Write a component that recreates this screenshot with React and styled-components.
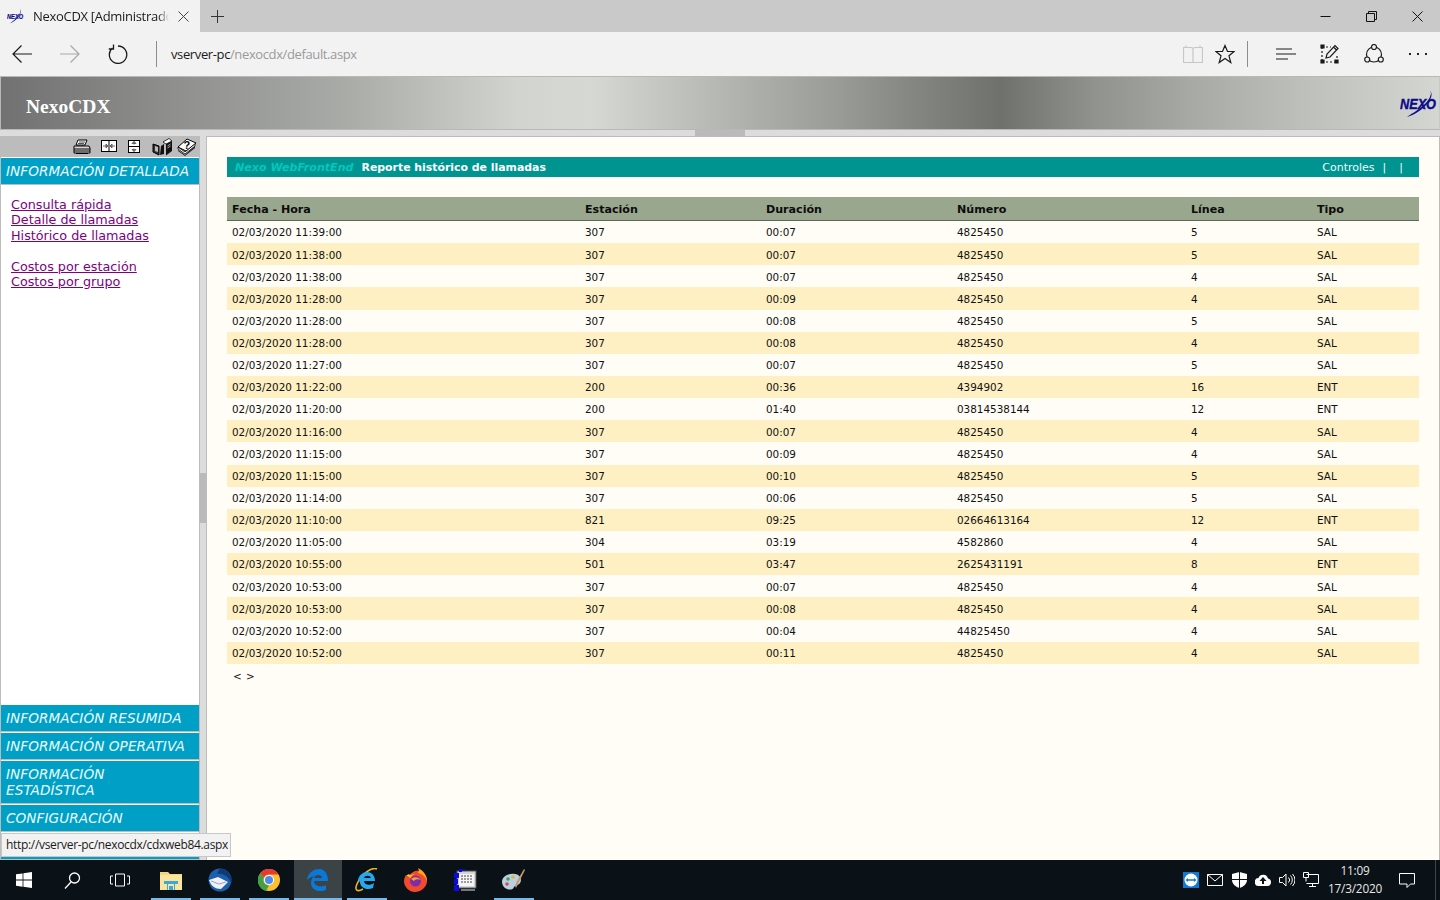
import styled, { createGlobalStyle } from 'styled-components'

const GlobalStyle = createGlobalStyle`
    html, body {
        margin: 0;
        height: 100%;
        overflow: hidden;
        background: #dcdcdc;
    }
    * { box-sizing: border-box; }
`

const calls = [
    ['02/03/2020 11:39:00', '307', '00:07', '4825450', '5', 'SAL'],
    ['02/03/2020 11:38:00', '307', '00:07', '4825450', '5', 'SAL'],
    ['02/03/2020 11:38:00', '307', '00:07', '4825450', '4', 'SAL'],
    ['02/03/2020 11:28:00', '307', '00:09', '4825450', '4', 'SAL'],
    ['02/03/2020 11:28:00', '307', '00:08', '4825450', '5', 'SAL'],
    ['02/03/2020 11:28:00', '307', '00:08', '4825450', '4', 'SAL'],
    ['02/03/2020 11:27:00', '307', '00:07', '4825450', '5', 'SAL'],
    ['02/03/2020 11:22:00', '200', '00:36', '4394902', '16', 'ENT'],
    ['02/03/2020 11:20:00', '200', '01:40', '03814538144', '12', 'ENT'],
    ['02/03/2020 11:16:00', '307', '00:07', '4825450', '4', 'SAL'],
    ['02/03/2020 11:15:00', '307', '00:09', '4825450', '4', 'SAL'],
    ['02/03/2020 11:15:00', '307', '00:10', '4825450', '5', 'SAL'],
    ['02/03/2020 11:14:00', '307', '00:06', '4825450', '5', 'SAL'],
    ['02/03/2020 11:10:00', '821', '09:25', '02664613164', '12', 'ENT'],
    ['02/03/2020 11:05:00', '304', '03:19', '4582860', '4', 'SAL'],
    ['02/03/2020 10:55:00', '501', '03:47', '2625431191', '8', 'ENT'],
    ['02/03/2020 10:53:00', '307', '00:07', '4825450', '4', 'SAL'],
    ['02/03/2020 10:53:00', '307', '00:08', '4825450', '4', 'SAL'],
    ['02/03/2020 10:52:00', '307', '00:04', '44825450', '4', 'SAL'],
    ['02/03/2020 10:52:00', '307', '00:11', '4825450', '4', 'SAL'],
]

const columns = ['Fecha - Hora', 'Estación', 'Duración', 'Número', 'Línea', 'Tipo']

// browser chrome drawings
const Stroke = ({ size = 20, w, h, children, color = '#1a1a1a', sw = 1.2 }) => (
    <svg width={w || size} height={h || size} viewBox={`0 0 ${w || size} ${h || size}`} fill="none" stroke={color} strokeWidth={sw}>
        {children}
    </svg>
)

const NexoLogo = ({ w = 38, h = 28 }) => (
    <svg width={w} height={h} viewBox="0 0 38 28" preserveAspectRatio="none">
        <path d="M30 1 C36 6 24 22 7 27 C14 22 30 14 31 3" fill="#10108a" />
        <text x="0" y="19" fontFamily="'Liberation Sans', sans-serif" fontWeight="700" fontStyle="italic" fontSize="14" textLength="36" lengthAdjust="spacingAndGlyphs" fill="#0c0c88" stroke="#0c0c88" strokeWidth=".4">NEXO</text>
    </svg>
)

const PrinterIcon = () => (
    <svg width="18" height="16" viewBox="0 0 18 16">
        <path d="M5 1h9l-2 5H3z" fill="#fff" stroke="#000" />
        <path d="M1 7h15l1 2v5H1z" fill="#d8d8d8" stroke="#000" />
        <path d="M1 10h16M1 12h16M3 14.500h12" stroke="#000" />
        <path d="M6 3h6M5 4.500h6" stroke="#555" />
    </svg>
)

const SplitIcon = ({ vertical }) => (
    <svg width={vertical ? 13 : 17} height="14" viewBox={vertical ? '0 0 13 14' : '0 0 17 14'}>
        {vertical ? (
            <>
                <rect x=".5" y=".5" width="11" height="12" fill="#fff" stroke="#000" />
                <path d="M1 6.500h11" stroke="#000" />
                <path d="M6 1.500v3M4 3.500h4l-2-2zM6 8.500v3M4 9.500h4l-2 2z" stroke="#666" fill="#666" />
            </>
        ) : (
            <>
                <rect x=".5" y=".5" width="15" height="11" fill="#fff" stroke="#000" />
                <path d="M8 1v10" stroke="#000" />
                <path d="M2 6h4M5 4v4l2-2zM10 6h4M11 4v4l-2-2z" stroke="#666" fill="#666" />
            </>
        )}
    </svg>
)

const BooksIcon = () => (
    <svg width="20" height="18" viewBox="0 0 20 18">
        <path d="M1 6l6 2v9l-6-3z" fill="#333" stroke="#000" />
        <path d="M3 8l3 1v5l-3-1z" fill="#bbb" />
        <path d="M9 8l3-2v10l-4 1z" fill="#111" />
        <path d="M11 4l6-3.500 3 2.500v10l-6 4.500V6z" fill="#111" />
        <path d="M11 4l6-3.500 3 2.500-6 3z" fill="#fff" stroke="#000" strokeWidth=".7" />
        <path d="M15.500 8l3-2M15.500 10l3-2" stroke="#aaa" />
    </svg>
)

const HelpBookIcon = () => (
    <svg width="20" height="18" viewBox="0 0 20 18">
        <path d="M1 12l7 5 10-9v2l-10 8-7-5z" fill="#222" />
        <path d="M1 9l7 5 10-9v3l-10 8-7-5z" fill="#fff" stroke="#000" strokeWidth=".8" />
        <path d="M1 9l9-8 9 4-10 8z" fill="#fff" stroke="#000" />
        <text x="6.500" y="10.500" fontFamily="'Liberation Sans', sans-serif" fontWeight="700" fontSize="11" fill="#000">?</text>
    </svg>
)

const WinLogo = () => (
    <svg width="16" height="16" viewBox="0 0 16 16" fill="#fff">
        <path d="M0 2.300l6.600-.9v6.200H0zM7.400 1.300L16 0v7.600H7.400zM0 8.400h6.600v6.300L0 13.800zM7.400 8.400H16V16l-8.600-1.200z" />
    </svg>
)

const FolderIcon = () => (
    <svg width="22" height="20" viewBox="0 0 22 20">
        <path d="M0 2h8l2 2h12v16H0z" fill="#f5d67e" />
        <path d="M0 5h22v15H0z" fill="#fbe49d" />
        <path d="M4 11h14v3h-3v6H7v-6H4z" fill="#3da7d9" />
        <path d="M8 14h6v6H8z" fill="#fbe49d" />
        <path d="M9 16h4v4H9z" fill="#3da7d9" />
    </svg>
)

const ThunderbirdIcon = () => (
    <svg width="24" height="24" viewBox="0 0 24 24">
        <circle cx="12" cy="12" r="11.500" fill="#1b5fae" />
        <path d="M12 .5a11.500 11.500 0 0 1 11 14c-3-7-8-9-14-9z" fill="#0e3a75" />
        <path d="M1 12l9-3 10 5-7 7C7 21 3 18 1 12z" fill="#f1f1f5" />
        <path d="M3 13l8 3 7-2" stroke="#9aa3c0" fill="none" />
    </svg>
)

const ChromeIcon = () => (
    <svg width="22" height="22" viewBox="0 0 22 22">
        <circle cx="11" cy="11" r="11" fill="#fbc02d" />
        <path d="M11 0a11 11 0 0 1 9.500 5.500H11a5.500 5.500 0 0 0-5 3L2.200 4.400A11 11 0 0 1 11 0z" fill="#e53935" />
        <path d="M2.200 4.400L6 8.500a5.500 5.500 0 0 0 5 8L8 22A11 11 0 0 1 2.200 4.400z" fill="#43a047" />
        <circle cx="11" cy="11" r="5" fill="#fff" />
        <circle cx="11" cy="11" r="4" fill="#4a8af4" />
    </svg>
)

const EdgeIcon = () => (
    <svg width="21" height="22" viewBox="0 0 21 22">
        <path d="M0 11C1 4 6 0 12 0c6 0 9 5 9 12H7c0 5 7 7 12 4v5c-7 3-15 0-15-7 0-3 1-5 3-7-3 1-5 2-7 4zm7-2h8c0-4-7-4-8 0z" fill="#0a78d7" />
    </svg>
)

const IEIcon = () => (
    <svg width="24" height="24" viewBox="0 0 24 24">
        <path d="M22 1C17-1 7 5 2 16c-3 7 1 8 6 5" fill="none" stroke="#e8b923" strokeWidth="1.600" />
        <path d="M3 12c1-5 5-8 9-8s8 3 8 9H9c0 4 6 5 10 2l-1 5c-7 3-13-1-13-6l-2-2zm6-2h7c-1-3-6-3-7 0z" fill="#2aa7ea" />
    </svg>
)

const FirefoxIcon = () => (
    <svg width="23" height="24" viewBox="0 0 23 24">
        <path d="M11 3c6-1 10 2 12 8 1 7-5 13-12 13C5 24 0 19 0 13c0-2 1-5 2-6 0 1 1 2 2 2 1-2 3-4 7-6z" fill="#f24a2e" />
        <path d="M14 0c6 3 9 8 9 13-2-5-5-7-9-8 1-2 1-3 0-5z" fill="#ffa41c" />
        <path d="M2 8c2-2 3-2 4-1l5-1c-3 1-4 3-4 4z" fill="#ffbd1e" />
        <circle cx="11.500" cy="13" r="5.500" fill="#7a2fa8" />
        <path d="M7 11c3-3 8-2 10 1-2-1-6-1-7 1-1-1-2-1-3-2z" fill="#ff9a2a" />
    </svg>
)

const AppIcon = () => (
    <svg width="24" height="24" viewBox="0 0 24 24">
        <rect x="4" y="3" width="19" height="17" fill="#d5d5d5" stroke="#555" />
        <rect x="6" y="6" width="15" height="12" fill="#f5f5f5" />
        <path d="M8 8h11M8 11h11M8 14h11" stroke="#444" strokeDasharray="2 1" />
        <path d="M8 21h14v2H8z" fill="#777" />
        <path d="M1 5h5v5H1zM6 1h3v3H6zM10 1h2v2h-2zM1 11h4v5H1zM1 17h5v6H1z" fill="#0a0ae8" />
    </svg>
)

const PaintIcon = () => (
    <svg width="24" height="24" viewBox="0 0 24 24">
        <path d="M0 14C0 8 7 5 13 6c6 1 7 6 5 9-2 3-5 2-6 4-1 3-4 3-7 2-3-1-5-4-5-7z" fill="#b8d0e0" />
        <circle cx="6" cy="11" r="1.800" fill="#3f9f4f" />
        <circle cx="11" cy="9" r="1.800" fill="#e8b040" />
        <circle cx="5" cy="16" r="1.800" fill="#d84a4a" />
        <path d="M22 1l1 1-7 14-2 4-1-2 2-5z" fill="#c79a62" />
    </svg>
)

const TeamViewerIcon = () => (
    <svg width="16" height="16" viewBox="0 0 16 16">
        <rect width="16" height="16" fill="#0e7ad6" />
        <circle cx="8" cy="8" r="6.500" fill="#fff" />
        <path d="M2.500 8l2.500-2v1.300h6V6l2.500 2-2.500 2V8.700H5V10z" fill="#0e7ad6" />
    </svg>
)

const TrayStroke = ({ children, w = 16, h = 16 }) => (
    <svg width={w} height={h} viewBox={`0 0 ${w} ${h}`} fill="none" stroke="#fff" strokeWidth="1">
        {children}
    </svg>
)

const WindowBar = styled.div`
    height: 32px;
    display: flex;
    background: #c9c9c9;
    flex-shrink: 0;
`
const Tab = styled.div`
    width: 200px;
    background: #f2f2f2;
    display: flex;
    align-items: center;
    padding-left: 7px;
    gap: 9px;
    color: #1a1a1a;
`
const TabTitle = styled.span`
    width: 136px;
    overflow: hidden;
    white-space: nowrap;
    font: 13px 'Open Sans', sans-serif;
    letter-spacing: -.3px;
    -webkit-mask-image: linear-gradient(to right, #000 92%, transparent);
`
const NewTab = styled.div`
    width: 34px;
    display: flex;
    align-items: center;
    justify-content: center;
`
const WindowControls = styled.div`
    margin-left: auto;
    display: flex;
`
const WindowControl = styled.div`
    width: 46px;
    display: flex;
    align-items: center;
    justify-content: center;
`
const AddressBar = styled.div`
    height: 44px;
    display: flex;
    align-items: center;
    background: #f2f2f2;
    padding-left: 12px;
    flex-shrink: 0;
`
const NavButton = styled.div`
    width: 48px;
    display: flex;
    justify-content: flex-start;
`
const BarDivider = styled.div`
    width: 1px;
    height: 26px;
    background: #8c8c8c;
    margin: ${props => props.$margin};
`
const Url = styled.div`
    font: 13px 'Open Sans', sans-serif;
    letter-spacing: -.38px;
    color: #9a9a9a;
    & > b {
        font-weight: 400;
        color: #1a1a1a;
    }
`
const BarTools = styled.div`
    margin-left: auto;
    display: flex;
    align-items: center;
`
const BarTool = styled.div`
    width: ${props => props.$w || 44}px;
    display: flex;
    justify-content: center;
`
const Page = styled.div`
    flex: 1;
    min-height: 0;
    display: flex;
    flex-direction: column;
    background: #dcdcdc;
`
const Banner = styled.header`
    height: 54px;
    flex-shrink: 0;
    border: 1px solid #b8b8b8;
    border-right-color: #c8c8c8;
    display: flex;
    align-items: center;
    justify-content: space-between;
    padding: 0 1px 0 25px;
    background: linear-gradient(to right, #707170 0%, #8f908e 12%, #a9aba7 24%, #d2d4d0 36%, #d6d8d4 41%, #c0c2be 47%, #aeb0ac 52%, #9a9c98 58%, #868884 63%, #6f716d 69.500%, #90928e 76%, #a8aaa6 83%, #bcbeba 90%, #d4d6d2 100%);
`
const BannerTitle = styled.div`
    font: bold 19.500px 'Liberation Serif', serif;
    color: #fff;
    margin-top: 8px;
`
const BannerLogo = styled.div`
    display: flex;
    margin-top: 1px;
`
const HSplit = styled.div`
    height: 6px;
    flex-shrink: 0;
    display: flex;
    justify-content: center;
`
const SplitHandle = styled.div`
    background: #bababa;
    width: ${props => props.$vertical ? '6px' : '50px'};
    height: ${props => props.$vertical ? '50px' : '6px'};
`
const Body = styled.div`
    flex: 1;
    min-height: 0;
    display: flex;
`
const Side = styled.aside`
    width: 200px;
    flex-shrink: 0;
    display: flex;
    flex-direction: column;
    border: solid #bcbcbc;
    border-width: 0 1px 0 1px;
    background: #fff;
`
const SideTools = styled.div`
    height: 21px;
    flex-shrink: 0;
    background: #bcbcbc;
    display: flex;
    align-items: center;
    justify-content: flex-end;
    padding-right: 2px;
`
const ToolSlot = styled.span`
    display: flex;
    margin-left: ${props => props.$gap}px;
`
const AccordionHead = styled.div`
    flex-shrink: 0;
    background: #00a0c6;
    color: #eafcff;
    font: italic 13.600px/16px 'DejaVu Sans', Verdana, sans-serif;
    letter-spacing: .08px;
    padding: ${props => props.$tall ? '5px 30px 5px 5px' : '5px'};
    border-top: 1px solid #fff;
    border-bottom: 1px solid #bcbcbc;
    min-height: 28px;
    white-space: ${props => props.$tall ? 'normal' : 'nowrap'};
    overflow: hidden;
`
const AccordionBody = styled.nav`
    flex: 1;
    padding: 12px 10px;
    display: flex;
    flex-direction: column;
`
const MenuLink = styled.a`
    color: #800080;
    text-decoration: underline;
    font: 12.750px/15.300px 'DejaVu Sans', Verdana, sans-serif;
    margin-bottom: ${props => props.$gap ? '16px' : 0};
`
const VSplit = styled.div`
    width: 6px;
    flex-shrink: 0;
    display: flex;
    align-items: center;
`
const Main = styled.main`
    flex: 1;
    min-width: 0;
    background: #fffdf6;
    border: 1px solid #bcbcbc;
    border-bottom: 0;
    padding: 20px 20px 0;
    display: flex;
    flex-direction: column;
    font-family: 'DejaVu Sans', Verdana, sans-serif;
`
const TitleBar = styled.div`
    height: 20px;
    flex-shrink: 0;
    background: #009490;
    display: flex;
    align-items: center;
    padding: 0 16px 0 8px;
    color: #fff;
`
const Brand = styled.span`
    font-size: 11.100px;
    font-weight: bold;
    font-style: italic;
    color: #00c8c0;
    margin-right: 8px;
`
const ReportName = styled.span`
    font-size: 10.900px;
    font-weight: bold;
`
const TitleLinks = styled.div`
    margin-left: auto;
    display: flex;
    font-size: 11px;
    gap: 8px;
    color: #eafafa;
`
const SecondPipe = styled.span`
    margin-left: 5px;
`
const Grid = styled.div`
    margin-top: 20px;
    display: flex;
    flex-direction: column;
`
const Row = styled.div`
    display: grid;
    grid-template-columns: 353px 181px 191px 234px 126px 107px;
    align-items: center;
    height: 22.150px;
    font-size: 10.400px;
    color: #111;
    padding-top: .6px;
    background: ${props => props.$stripe ? '#fef0c2' : 'transparent'};
`
const HeadRow = styled(Row)`
    height: 24px;
    padding-top: 2px;
    background: #9aa78f;
    border-bottom: 1px solid #5e6a57;
    font-size: 11.100px;
    font-weight: bold;
    color: #0c0c0c;
`
const Cell = styled.div`
    padding-left: 5px;
`
const Pager = styled.div`
    margin-top: 6px;
    padding-left: 6px;
    font-size: 10.400px;
    color: #111;
    word-spacing: 1px;
`
const TooltipBox = styled.div`
    position: absolute;
    left: 1px;
    bottom: 43px;
    width: 230px;
    height: 24px;
    background: #f2f2f2;
    border: 1px solid #c8c8c8;
    padding-left: 4px;
    font: 12px/22px 'Open Sans', sans-serif;
    letter-spacing: -.32px;
    color: #1a1a1a;
    white-space: nowrap;
`
const Taskbar = styled.footer`
    height: 40px;
    flex-shrink: 0;
    display: flex;
    align-items: stretch;
    background: #0a1117;
    color: #fff;
`
const SystemButton = styled.div`
    width: 48px;
    display: flex;
    align-items: center;
    justify-content: center;
`
const Apps = styled.div`
    display: flex;
    margin-left: 2px;
`
const AppButton = styled.div`
    position: relative;
    width: 49px;
    display: flex;
    align-items: center;
    justify-content: center;
    &::before {
        content: '';
        position: absolute;
        inset: 0 .5px;
        background: ${props => props.$active ? '#3c4347' : 'transparent'};
    }
    &::after {
        content: '';
        position: absolute;
        left: ${props => props.$active ? '.5px' : '4.500px'};
        right: ${props => props.$active ? '.5px' : '4.500px'};
        bottom: 0;
        height: 2px;
        background: ${props => props.$running ? '#76b9ed' : 'transparent'};
    }
    & > svg {
        position: relative;
    }
`
const Tray = styled.div`
    margin-left: auto;
    display: flex;
    align-items: center;
`
const TrayIcon = styled.div`
    width: 24px;
    display: flex;
    justify-content: center;
`
const Clock = styled.div`
    width: 64px;
    text-align: center;
    font: 11.800px/18px 'Open Sans', sans-serif;
    letter-spacing: -.2px;
    color: #e8e8e8;
    padding-bottom: 2px;
`
const Notify = styled.div`
    width: 40px;
    display: flex;
    justify-content: center;
`
const DesktopEdge = styled.div`
    align-self: stretch;
    width: 5px;
    margin-left: 8px;
    border-left: 1px solid #3f4649;
`
const Screen = styled.div`
    position: relative;
    height: 900px;
    width: 1440px;
    display: flex;
    flex-direction: column;
    overflow: hidden;
`

export default function App() {
    return (
        <Screen>
            <GlobalStyle />
            <WindowBar>
                <Tab>
                    <NexoLogo w={17} h={16} />
                    <TabTitle>NexoCDX [Administrador]</TabTitle>
                    <Stroke size={11} color="#444" sw={1}>
                        <path d="M.5.5l10 10M10.500.5l-10 10" />
                    </Stroke>
                </Tab>
                <NewTab>
                    <Stroke size={13} color="#333" sw={1}>
                        <path d="M6.500 0v13M0 6.500h13" />
                    </Stroke>
                </NewTab>
                <WindowControls>
                    <WindowControl>
                        <Stroke size={11} color="#111" sw={1}><path d="M.5 5.500h10" /></Stroke>
                    </WindowControl>
                    <WindowControl>
                        <Stroke size={11} color="#111" sw={1}><path d="M.5 2.500h8v8h-8zM2.500 2.500v-2h8v8h-2" /></Stroke>
                    </WindowControl>
                    <WindowControl>
                        <Stroke size={11} color="#111" sw={1}><path d="M.5.5l10 10M10.500.5l-10 10" /></Stroke>
                    </WindowControl>
                </WindowControls>
            </WindowBar>
            <AddressBar>
                <NavButton>
                    <Stroke size={20} sw={1.200}><path d="M1 10h19M9.500 1.500L1 10l8.500 8.500" /></Stroke>
                </NavButton>
                <NavButton>
                    <Stroke size={20} color="#a8a8a8" sw={1.200}><path d="M0 10h19M10.500 1.500L19 10l-8.500 8.500" /></Stroke>
                </NavButton>
                <NavButton>
                    <Stroke size={20} sw={1.300}><path d="M10 2a8.700 8.700 0 1 1-5.500 2M5.500.5v4.500H.8" /></Stroke>
                </NavButton>
                <BarDivider $margin="0 14px 0 0" />
                <Url><b>vserver-pc</b>/nexocdx/default.aspx</Url>
                <BarTools>
                    <BarTool $w={32}>
                        <Stroke w={20} h={18} color="#c6c6c6" sw={1.200}><path d="M.5 2.500h7q2 0 2.500 1 .5-1 2.500-1h7v15h-19zM10 3.500v14M3 .5v2M17 .5v2" /></Stroke>
                    </BarTool>
                    <BarTool $w={32}>
                        <Stroke size={20} sw={1.200}><path d="M10 1.500l2.500 6h6.500l-5 4.300 1.800 6.700L10 14.500l-5.800 4 1.800-6.700-5-4.300h6.500z" /></Stroke>
                    </BarTool>
                    <BarDivider $margin="0 16px 0 6px" />
                    <BarTool>
                        <Stroke w={20} h={14} sw={1.200}><path d="M0 2h16M0 7h20M0 12h12" /></Stroke>
                    </BarTool>
                    <BarTool>
                        <Stroke size={20} sw={1.200}>
                            <path d="M2 3h9M2 3v15M2 18h15M17 18v-8" strokeDasharray="2 2" />
                            <path d="M1 1h3v3H1zM1 16h3v3H1zM15 16h3v3h-3z" fill="#1a1a1a" />
                            <path d="M6 14l1-4 8-8.500 3 3-8 8.500zM13.500 3l3 3" />
                        </Stroke>
                    </BarTool>
                    <BarTool>
                        <Stroke size={20} sw={1.200}>
                            <circle cx="10" cy="10.500" r="7.500" />
                            <circle cx="10" cy="3" r="2.500" fill="#f2f2f2" />
                            <circle cx="3.200" cy="15.500" r="2.500" fill="#f2f2f2" />
                            <circle cx="16.800" cy="15.500" r="2.500" fill="#f2f2f2" />
                        </Stroke>
                    </BarTool>
                    <BarTool>
                        <Stroke w={20} h={4} sw={2} color="#222"><path d="M1 2h2M9 2h2M17 2h2" /></Stroke>
                    </BarTool>
                </BarTools>
            </AddressBar>
            <Page>
                <Banner>
                    <BannerTitle>NexoCDX</BannerTitle>
                    <BannerLogo><NexoLogo /></BannerLogo>
                </Banner>
                <HSplit><SplitHandle /></HSplit>
                <Body>
                    <Side>
                        <SideTools>
                            <ToolSlot $gap={0}><PrinterIcon /></ToolSlot>
                            <ToolSlot $gap={10}><SplitIcon /></ToolSlot>
                            <ToolSlot $gap={10}><SplitIcon vertical /></ToolSlot>
                            <ToolSlot $gap={11}><BooksIcon /></ToolSlot>
                            <ToolSlot $gap={5}><HelpBookIcon /></ToolSlot>
                        </SideTools>
                        <AccordionHead>INFORMACIÓN DETALLADA</AccordionHead>
                        <AccordionBody>
                            <MenuLink href="#">Consulta rápida</MenuLink>
                            <MenuLink href="#">Detalle de llamadas</MenuLink>
                            <MenuLink href="#" $gap>Histórico de llamadas</MenuLink>
                            <MenuLink href="#">Costos por estación</MenuLink>
                            <MenuLink href="#">Costos por grupo</MenuLink>
                        </AccordionBody>
                        <AccordionHead>INFORMACIÓN RESUMIDA</AccordionHead>
                        <AccordionHead>INFORMACIÓN OPERATIVA</AccordionHead>
                        <AccordionHead $tall>INFORMACIÓN ESTADÍSTICA</AccordionHead>
                        <AccordionHead>CONFIGURACIÓN</AccordionHead>
                        <AccordionHead />
                    </Side>
                    <VSplit><SplitHandle $vertical /></VSplit>
                    <Main>
                        <TitleBar>
                            <Brand>Nexo WebFrontEnd</Brand>
                            <ReportName>Reporte histórico de llamadas</ReportName>
                            <TitleLinks>
                                <span>Controles</span>
                                <span>|</span>
                                <SecondPipe>|</SecondPipe>
                            </TitleLinks>
                        </TitleBar>
                        <Grid>
                            <HeadRow>
                                {columns.map(c => <Cell key={c}>{c}</Cell>)}
                            </HeadRow>
                            {calls.map((call, i) => (
                                <Row key={i} $stripe={i % 2 === 1}>
                                    {call.map((value, j) => <Cell key={j}>{value}</Cell>)}
                                </Row>
                            ))}
                        </Grid>
                        <Pager>&lt; &gt;</Pager>
                    </Main>
                </Body>
            </Page>
            <TooltipBox>http://vserver-pc/nexocdx/cdxweb84.aspx</TooltipBox>
            <Taskbar>
                <SystemButton><WinLogo /></SystemButton>
                <SystemButton>
                    <Stroke size={17} color="#fff" sw={1.300}><circle cx="10.500" cy="6" r="5" /><path d="M7 10l-6 6.500" /></Stroke>
                </SystemButton>
                <SystemButton>
                    <Stroke w={20} h={14} color="#fff" sw={1}><path d="M5.500 1h9v12h-9zM3 3H.5v8H3M17 3h2.500v8H17" /></Stroke>
                </SystemButton>
                <Apps>
                    <AppButton $running><FolderIcon /></AppButton>
                    <AppButton $running><ThunderbirdIcon /></AppButton>
                    <AppButton $running><ChromeIcon /></AppButton>
                    <AppButton $running $active><EdgeIcon /></AppButton>
                    <AppButton $running><IEIcon /></AppButton>
                    <AppButton><FirefoxIcon /></AppButton>
                    <AppButton><AppIcon /></AppButton>
                    <AppButton $running><PaintIcon /></AppButton>
                </Apps>
                <Tray>
                    <TrayIcon><TeamViewerIcon /></TrayIcon>
                    <TrayIcon>
                        <TrayStroke h={12}><path d="M.5.5h15v11H.5zM.5.5L8 7l7.500-6.500" /></TrayStroke>
                    </TrayIcon>
                    <TrayIcon>
                        <svg width="15" height="16" viewBox="0 0 15 16">
                            <path d="M7.500 0L15 2v6c0 4-4 7-7.500 8C4 15 0 12 0 8V2z" fill="#fff" />
                            <path d="M7 0h1v16H7zM0 7h15v1H0z" fill="#0a1117" />
                        </svg>
                    </TrayIcon>
                    <TrayIcon>
                        <svg width="16" height="12" viewBox="0 0 16 12">
                            <path d="M4 12a4 4 0 0 1-.5-8A5 5 0 0 1 13 4.500 3.800 3.800 0 0 1 12.500 12z" fill="#fff" />
                            <path d="M8 3l3.500 4H9v3H7V7H4.500z" fill="#0a1117" />
                        </svg>
                    </TrayIcon>
                    <TrayIcon>
                        <TrayStroke h={14}><path d="M.5 4.500h3L7 1v12L3.500 9.500h-3zM9.500 4.500a3.500 3.500 0 0 1 0 5M11.500 2.500a6.500 6.500 0 0 1 0 9M13.500 1a8.500 8.500 0 0 1 0 12" /></TrayStroke>
                    </TrayIcon>
                    <TrayIcon>
                        <TrayStroke><path d="M3.500 2.500h12v9h-12M9.500 11.500v3M6 14.500h7M.5.500h5v5h-5zM3 5.500v4" /></TrayStroke>
                    </TrayIcon>
                    <Clock>
                        <div>11:09</div>
                        <div>17/3/2020</div>
                    </Clock>
                    <Notify>
                        <Stroke w={16} h={15} color="#fff" sw={1}><path d="M.5.500h15v10.500h-4l-3.500 3.500L8 11H.5z" /></Stroke>
                    </Notify>
                    <DesktopEdge />
                </Tray>
            </Taskbar>
        </Screen>
    )
}
